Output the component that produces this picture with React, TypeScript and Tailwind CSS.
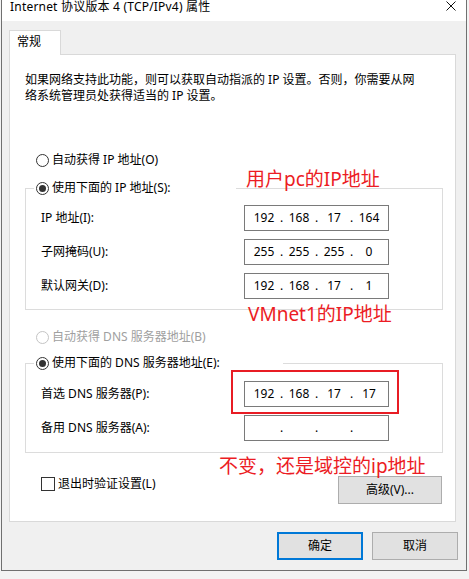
import { Fragment } from "react";

function Radio({ checked, disabled }: { checked?: boolean; disabled?: boolean }) {
  return (
    <span
      className={
        disabled
          ? "w-[13px] h-[13px] rounded-full border border-[#c4c4c4] bg-white flex items-center justify-center shrink-0"
          : "w-[13px] h-[13px] rounded-full border border-[#333333] bg-white flex items-center justify-center shrink-0"
      }
    >
      {checked && <span className="w-[7px] h-[7px] rounded-full bg-[#333333]" />}
    </span>
  );
}

function IpBox({ parts }: { parts: string[] }) {
  return (
    <div className="w-[145px] h-[26px] border border-[#7a7a7a] bg-white flex items-center pl-[4px] text-black">
      {parts.map((p, i) => (
        <Fragment key={i}>
          <span className="w-[30px] text-center">{p}</span>
          {i < 3 && <span className="w-[5px] text-center">.</span>}
        </Fragment>
      ))}
    </div>
  );
}

function Row({ label, parts }: { label: string; parts: string[] }) {
  return (
    <div className="flex items-center h-[26px]">
      <span className="w-[203px]">{label}</span>
      <IpBox parts={parts} />
    </div>
  );
}

export default function App() {
  return (
    <div className="w-[469px] h-[579px] bg-[#f3f3f3] overflow-hidden relative font-['Noto_Sans','Noto_Sans_CJK_SC',sans-serif] text-[12px] leading-[16px] text-black">
      <div className="ml-[1px] w-[466px] h-[571px] border-l border-r border-b border-[#707070] bg-[#f0f0f0] flex flex-col">
        {/* title bar */}
        <div className="h-[21px] bg-white flex items-start shrink-0">
          <span className="pl-[8px] leading-[14px] tracking-[0.2px]">Internet 协议版本 4 (TCP/IPv4) 属性</span>
          <svg className="ml-auto mr-[10px] mt-[1px]" width="10" height="10" viewBox="0 0 10 10">
            <path d="M0.5 0.5 L9.5 9.5 M9.5 0.5 L0.5 9.5" stroke="#111" strokeWidth="1" fill="none" />
          </svg>
        </div>
        {/* body */}
        <div className="pt-[9px] flex flex-col">
          <div className="ml-[7px] w-[52px] h-[25px] border-t border-l border-r border-[#d9d9d9] bg-white relative z-10 -mb-px pl-[7px] pt-[3px]">
            常规
          </div>
          <div className="ml-[7px] w-[447px] h-[468px] border border-[#d9d9d9] bg-white flex flex-col">
            <div className="pt-[17px] pl-[15px]">
              如果网络支持此功能，则可以获取自动指派的 IP 设置。否则，你需要从网
              <br />
              络系统管理员处获得适当的 IP 设置。
            </div>
            <div className="mt-[48px] pl-[26px] h-[16px] flex items-center gap-[3px]">
              <Radio />
              <span>自动获得 IP 地址(O)</span>
            </div>
            <fieldset className="mt-[12px] ml-[15px] w-[418px] border border-[#dcdcdc] p-0 m-0">
              <legend className="ml-[8px] w-[202px] pl-[2px] h-[16px]">
                <span className="flex items-center gap-[3px] h-[16px]">
                  <Radio checked />
                  <span>使用下面的 IP 地址(S):</span>
                </span>
              </legend>
              <div className="pt-[9px] pb-[10px] pl-[15px] flex flex-col gap-[8px]">
                <Row label="IP 地址(I):" parts={["192", "168", "17", "164"]} />
                <Row label="子网掩码(U):" parts={["255", "255", "255", "0"]} />
                <Row label="默认网关(D):" parts={["192", "168", "17", "1"]} />
              </div>
            </fieldset>
            <div className="mt-[19px] pl-[26px] h-[16px] flex items-center gap-[3px] text-[#a0a0a0]">
              <Radio disabled />
              <span>自动获得 DNS 服务器地址(B)</span>
            </div>
            <fieldset className="mt-[10px] ml-[15px] w-[418px] border border-[#dcdcdc] p-0 m-0">
              <legend className="ml-[8px] w-[249px] pl-[2px] h-[16px]">
                <span className="flex items-center gap-[3px] h-[16px]">
                  <Radio checked />
                  <span>使用下面的 DNS 服务器地址(E):</span>
                </span>
              </legend>
              <div className="pt-[10px] pb-[11px] pl-[15px] flex flex-col gap-[8px]">
                <Row label="首选 DNS 服务器(P):" parts={["192", "168", "17", "17"]} />
                <Row label="备用 DNS 服务器(A):" parts={["", "", "", ""]} />
              </div>
            </fieldset>
            <div className="mt-[23px] flex items-start justify-between">
              <div className="pl-[31px] h-[16px] flex items-center gap-[3px]">
                <span className="w-[14px] h-[14px] border border-[#333333] bg-white shrink-0" />
                <span>退出时验证设置(L)</span>
              </div>
              <div className="mr-[13px] w-[104px] h-[28px] bg-[#e1e1e1] border border-[#adadad] flex items-center justify-center">
                高级(V)...
              </div>
            </div>
          </div>
          <div className="mt-[10px] mr-[8px] flex justify-end gap-[9px]">
            <div className="w-[86px] h-[28px] bg-[#e1e1e1] border-2 border-[#0078d7] flex items-center justify-center">
              确定
            </div>
            <div className="w-[86px] h-[28px] bg-[#e1e1e1] border border-[#adadad] flex items-center justify-center">
              取消
            </div>
          </div>
        </div>
      </div>

      {/* annotations */}
      <div className="absolute left-[246px] top-[167px] text-[19px] leading-[24px] text-[#ec1c24]">用户pc的IP地址</div>
      <div className="absolute left-[248px] top-[302px] text-[19px] leading-[24px] text-[#ec1c24]">VMnet1的IP地址</div>
      <div className="absolute left-[219px] top-[454px] text-[19px] leading-[24px] text-[#ec1c24]">不变，还是域控的ip地址</div>
      <div className="absolute left-[231px] top-[370px] w-[168px] h-[44px] border-2 border-[#e81c24]" />
    </div>
  );
}
